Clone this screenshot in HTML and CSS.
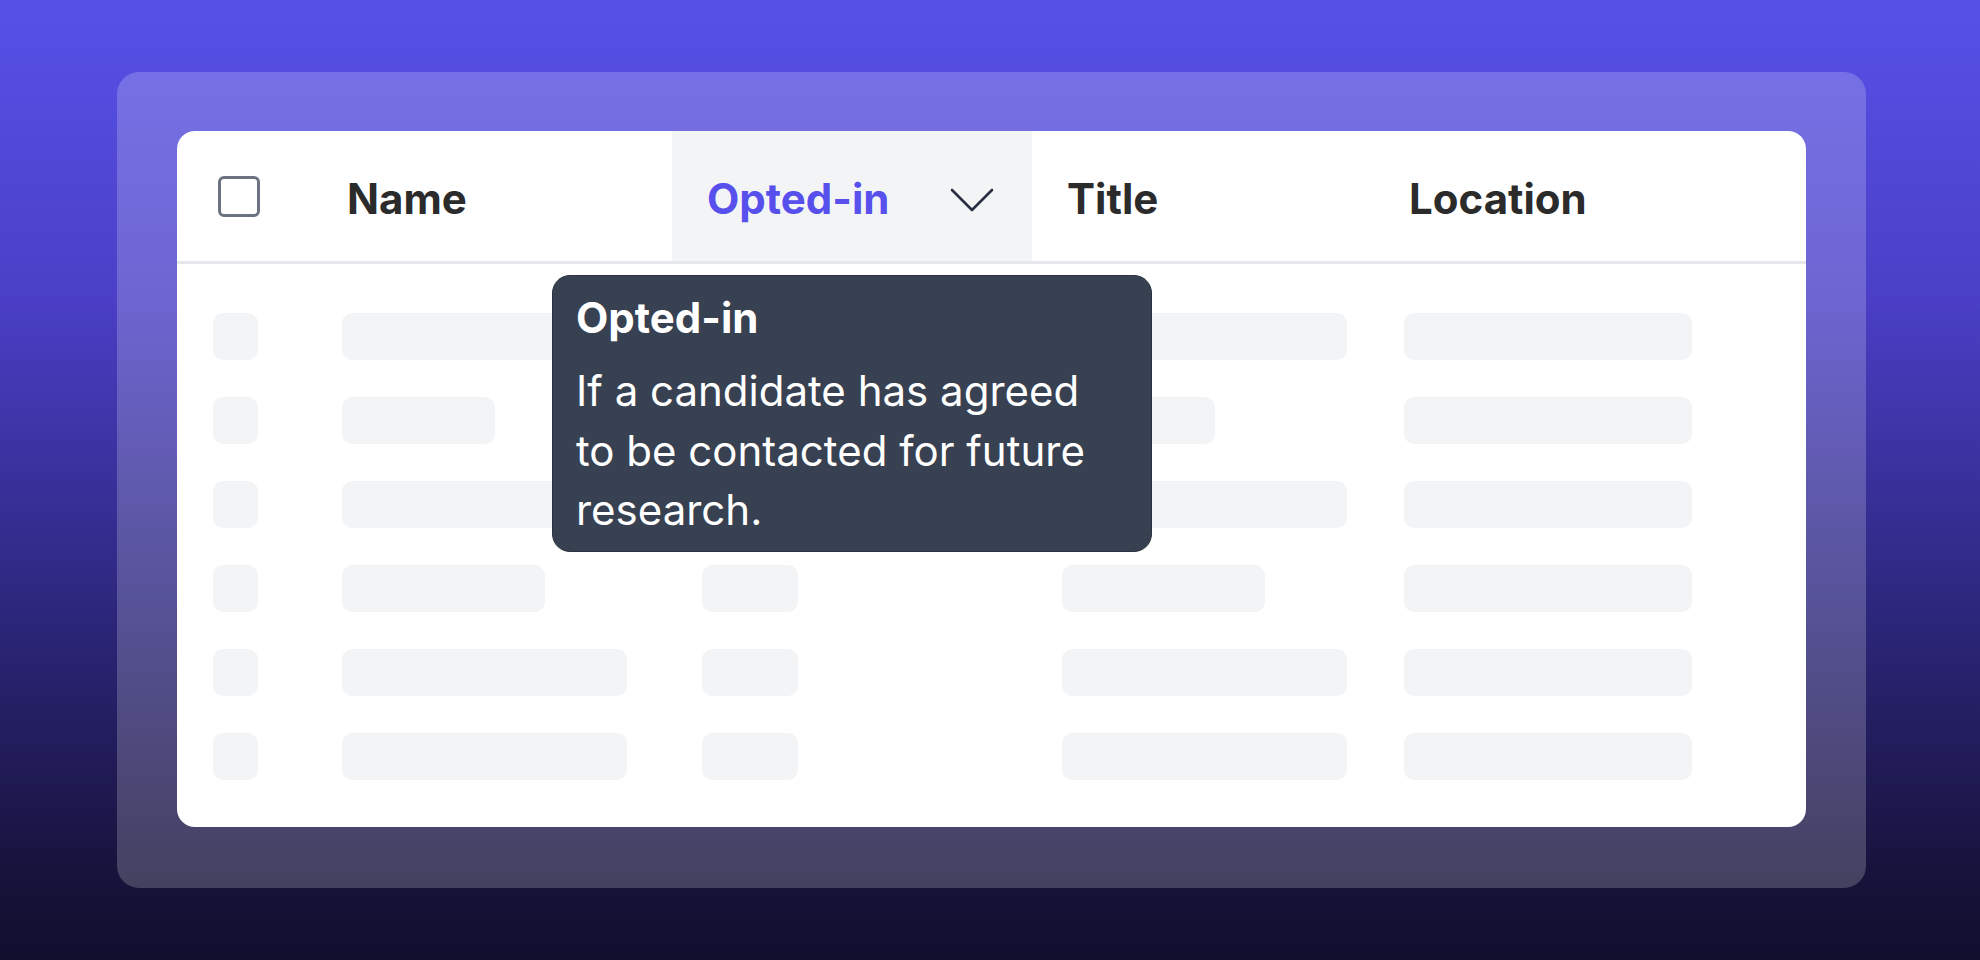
FILE: index.html
```html
<!DOCTYPE html>
<html lang="en">
<head>
<meta charset="utf-8">
<title>Opted-in tooltip</title>
<link rel="stylesheet" href="styles.css">
</head>
<body>
  <div class="panel">
    <div class="card">
      <div class="thead">
        <div class="th th-check"><span class="checkbox"></span></div>
        <div class="th">Name</div>
        <div class="th th-active">
          <span>Opted-in</span>
          <svg class="chevron" width="44" height="24" viewBox="0 0 44 24" aria-hidden="true">
            <path d="M2 2 L22 22 L42 2" fill="none" stroke="#283040" stroke-width="2.6" stroke-linecap="round" stroke-linejoin="round"/>
          </svg>
        </div>
        <div class="th">Title</div>
        <div class="th">Location</div>
      </div>

      <div class="tbody">
        <div class="tr">
          <div class="td td-check"><span class="bar bar-check"></span></div>
          <div class="td"><span class="bar w-lg"></span></div>
          <div class="td"><span class="bar w-xs"></span></div>
          <div class="td"><span class="bar w-lg"></span></div>
          <div class="td"><span class="bar w-loc"></span></div>
        </div>
        <div class="tr">
          <div class="td td-check"><span class="bar bar-check"></span></div>
          <div class="td"><span class="bar w-sm"></span></div>
          <div class="td"><span class="bar w-xs"></span></div>
          <div class="td"><span class="bar w-sm"></span></div>
          <div class="td"><span class="bar w-loc"></span></div>
        </div>
        <div class="tr">
          <div class="td td-check"><span class="bar bar-check"></span></div>
          <div class="td"><span class="bar w-lg"></span></div>
          <div class="td"><span class="bar w-xs"></span></div>
          <div class="td"><span class="bar w-lg"></span></div>
          <div class="td"><span class="bar w-loc"></span></div>
        </div>
        <div class="tr">
          <div class="td td-check"><span class="bar bar-check"></span></div>
          <div class="td"><span class="bar w-md"></span></div>
          <div class="td"><span class="bar w-xs"></span></div>
          <div class="td"><span class="bar w-md"></span></div>
          <div class="td"><span class="bar w-loc"></span></div>
        </div>
        <div class="tr">
          <div class="td td-check"><span class="bar bar-check"></span></div>
          <div class="td"><span class="bar w-lg"></span></div>
          <div class="td"><span class="bar w-xs"></span></div>
          <div class="td"><span class="bar w-lg"></span></div>
          <div class="td"><span class="bar w-loc"></span></div>
        </div>
        <div class="tr">
          <div class="td td-check"><span class="bar bar-check"></span></div>
          <div class="td"><span class="bar w-lg"></span></div>
          <div class="td"><span class="bar w-xs"></span></div>
          <div class="td"><span class="bar w-lg"></span></div>
          <div class="td"><span class="bar w-loc"></span></div>
        </div>
      </div>

      <div class="tooltip">
        <div class="tooltip-title">Opted-in</div>
        <p class="tooltip-text">If a candidate has agreed to be contacted for future research.</p>
      </div>
    </div>
  </div>
</body>
</html>
```

FILE: styles.css
```css
* { box-sizing: border-box; }

html, body {
  margin: 0;
  padding: 0;
}

body {
  width: 1980px;
  height: 960px;
  overflow: hidden;
  font-family: "Inter", "Noto Sans", sans-serif;
  background: linear-gradient(to bottom, #5751e8 0%, #4a3fc6 31%, #2e2880 62%, #161239 92%, #110f2e 100%);
  padding-top: 72px;
  padding-left: 117px;
}

.panel {
  width: 1749px;
  height: 816px;
  padding: 59px 60px 61px 60px;
  border-radius: 22px;
  background: rgba(255, 255, 255, 0.2);
}

.card {
  position: relative;
  width: 1629px;
  height: 696px;
  background: #ffffff;
  border-radius: 18px;
}

.thead {
  display: grid;
  grid-template-columns: 135px 360px 360px 342px 1fr;
  height: 133px;
  border-bottom: 3px solid #e5e7eb;
}

.th {
  display: flex;
  align-items: center;
  padding-left: 35px;
  padding-top: 5px;
  font-size: 42px;
  font-weight: 700;
  color: #2b2b2b;
}

.th-check {
  padding-left: 41px;
  padding-top: 0;
}

.checkbox {
  display: block;
  width: 42px;
  height: 41px;
  border: 3px solid #6b7280;
  border-radius: 6px;
  background: #fff;
}

.th-active {
  justify-content: space-between;
  padding-right: 38px;
  background: #f3f4f6;
  color: #5850ec;
}

.chevron {
  display: block;
  margin-top: 2px;
}

.tbody {
  padding-top: 30px;
}

.tr {
  display: grid;
  grid-template-columns: 135px 360px 360px 342px 1fr;
  height: 84px;
  align-items: center;
}

.td {
  padding-left: 30px;
  display: flex;
  align-items: center;
}

.td-check {
  padding-left: 36px;
}

.bar {
  display: block;
  height: 47px;
  border-radius: 10px;
  background: #f3f4f6;
}

.bar-check { width: 45px; }
.w-xs { width: 96px; }
.w-sm { width: 153px; }
.w-md { width: 203px; }
.w-lg { width: 285px; }
.w-loc { width: 288px; }

.tooltip {
  position: absolute;
  left: 375px;
  top: 144px;
  width: 600px;
  height: 277px;
  padding: 16px 50px 0 23px;
  background: #374151;
  border: 1px solid #2b3340;
  border-radius: 18px;
  color: #ffffff;
}

.tooltip-title {
  font-size: 42px;
  font-weight: 700;
  line-height: 51px;
}

.tooltip-text {
  margin: 18px 0 0 0;
  font-size: 42px;
  font-weight: 400;
  line-height: 59.5px;
}
```
